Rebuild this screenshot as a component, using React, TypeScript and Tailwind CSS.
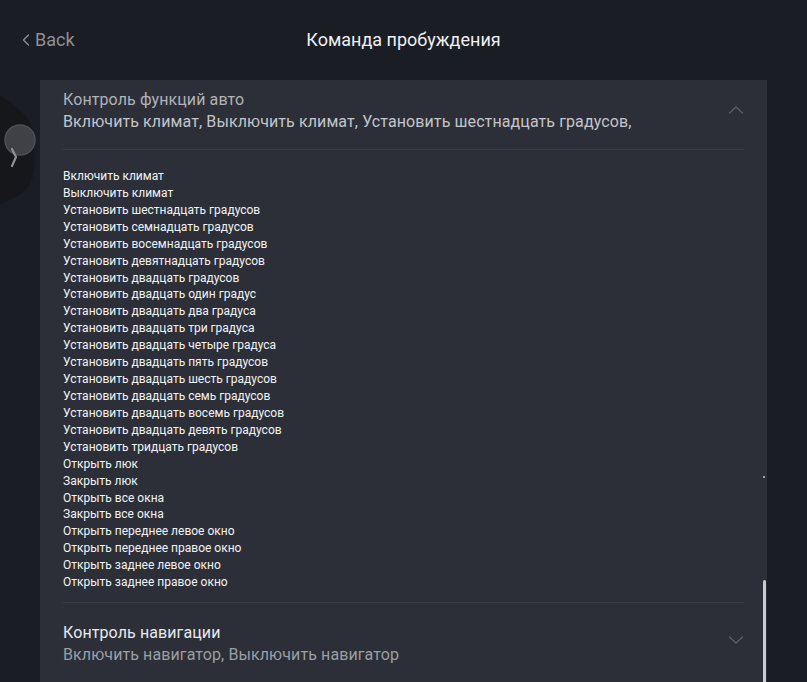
import React from 'react';

const commands = [
  'Включить климат',
  'Выключить климат',
  'Установить шестнадцать градусов',
  'Установить семнадцать градусов',
  'Установить восемнадцать градусов',
  'Установить девятнадцать градусов',
  'Установить двадцать градусов',
  'Установить двадцать один градус',
  'Установить двадцать два градуса',
  'Установить двадцать три градуса',
  'Установить двадцать четыре градуса',
  'Установить двадцать пять градусов',
  'Установить двадцать шесть градусов',
  'Установить двадцать семь градусов',
  'Установить двадцать восемь градусов',
  'Установить двадцать девять градусов',
  'Установить тридцать градусов',
  'Открыть люк',
  'Закрыть люк',
  'Открыть все окна',
  'Закрыть все окна',
  'Открыть переднее левое окно',
  'Открыть переднее правое окно',
  'Открыть заднее левое окно',
  'Открыть заднее правое окно',
];

const Chevron: React.FC<{ up?: boolean }> = ({ up }) => (
  <svg width="16" height="10" viewBox="0 0 16 10" fill="none" className="shrink-0">
    <path
      d={up ? 'M1.5 8L8 2l6.5 6' : 'M1.5 2L8 8l6.5-6'}
      stroke="#5b5e65"
      strokeWidth="1.4"
      strokeLinecap="round"
      strokeLinejoin="round"
    />
  </svg>
);

const App: React.FC = () => {
  return (
    <div
      className="relative min-h-[682px] h-[682px] overflow-hidden bg-[#1b1d24]"
      style={{ fontFamily: 'Roboto, "Noto Sans", sans-serif' }}
    >
      {/* Header */}
      <div className="relative flex h-[80px] items-center justify-center">
        <div className="absolute left-[22px] top-[29px] flex items-center gap-[5px] text-[18px] leading-[22px] text-[#8d9096]">
          <svg width="8" height="12" viewBox="0 0 8 12" fill="none">
            <path d="M6.5 1L1.5 6l5 5" stroke="#8d9096" strokeWidth="1.3" strokeLinecap="round" strokeLinejoin="round" />
          </svg>
          <span>Back</span>
        </div>
        <h1 className="text-[18px] leading-[22px] text-[#eef0f2] -mt-[1px]">Команда пробуждения</h1>
      </div>

      {/* Side handle overlay */}
      <svg className="absolute left-0 top-[92px] z-10" width="44" height="116" viewBox="0 0 44 116" fill="none">
        <path d="M0 4 C8 8 16 14 22 20 C30 28 34 38 34 50 C34 66 36 80 30 92 C24 102 12 108 0 112 Z" fill="#15171b" />
        <circle cx="20" cy="48" r="15" fill="#3f4147" stroke="#4c4e54" strokeWidth="1.5" />
        <path d="M12 57 L16 65 L12 74" stroke="#8e9095" strokeWidth="2.2" strokeLinecap="round" strokeLinejoin="round" />
      </svg>

      {/* Panel */}
      <div className="relative mx-10 min-h-[602px] bg-[#2c2f37] px-[23px] pt-[9px]">
        <div className="flex items-start justify-between">
          <div className="tracking-[0.1px]">
            <div className="text-[16px] leading-[22px] text-[#b0b3b9]">Контроль функций авто</div>
            <div className="text-[16px] leading-[22px] text-[#c3c5ca]">
              Включить климат, Выключить климат, Установить шестнадцать градусов,
            </div>
          </div>
          <div className="mt-[16px]">
            <Chevron up />
          </div>
        </div>
        <div className="mt-[16px] h-px bg-[#383b43]" />

        <ul className="pt-[18px] pb-[11px]">
          {commands.map((c) => (
            <li key={c} className="text-[12px] leading-[16.92px] text-[#f2f3f5]">
              {c}
            </li>
          ))}
        </ul>
        <div className="h-px bg-[#383b43]" />

        <div className="flex items-start justify-between pt-[19px]">
          <div className="tracking-[0.1px]">
            <div className="text-[16px] leading-[22px] text-[#e9eaec]">Контроль навигации</div>
            <div className="text-[16px] leading-[22px] text-[#9b9ea4]">
              Включить навигатор, Выключить навигатор
            </div>
          </div>
          <div className="mt-[13px]">
            <Chevron />
          </div>
        </div>

        {/* Scrollbar */}
        <div className="absolute right-[1px] top-0 bottom-0 w-[3px]">
          <div className="absolute left-0 top-[396px] h-[2px] w-[2px] bg-[#9a9ca1]" />
          <div className="absolute left-0 top-[500px] h-[200px] w-[3px] rounded-full bg-[#c9cacd]" />
        </div>
      </div>
    </div>
  );
};

export default App;
